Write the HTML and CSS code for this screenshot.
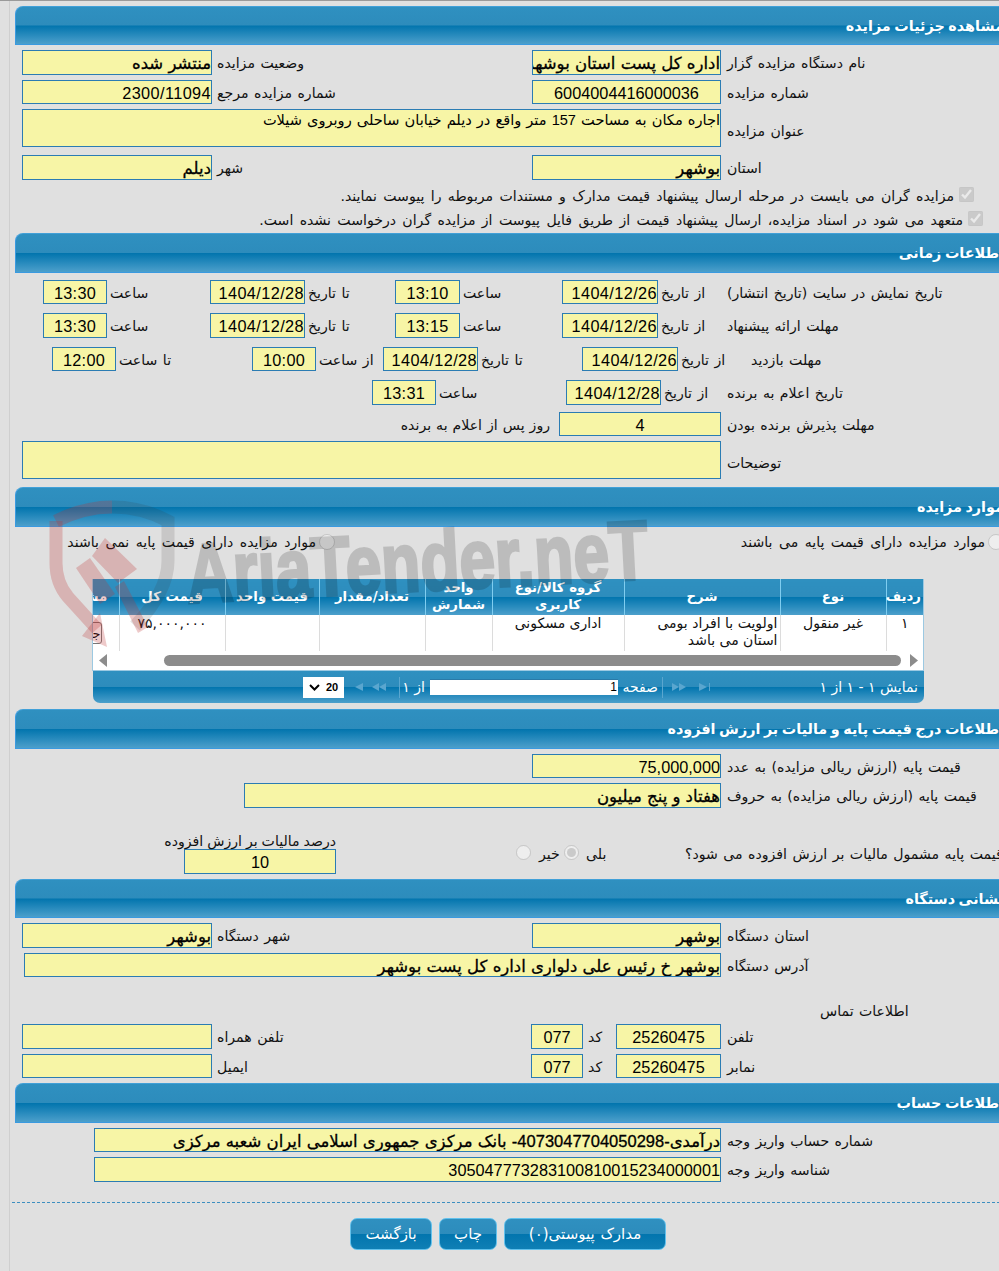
FILE: index.html
```html
<!DOCTYPE html>
<html lang="fa">
<head>
<meta charset="utf-8">
<title>مشاهده جزئیات مزایده</title>
<link rel="stylesheet" href="styles.css">
</head>
<body>
<div class="wrap">

<h2 class="sec h39">مشاهده جزئیات مزایده</h2>
<div class="row form2 h25">
  <div class="f b">منتشر شده</div><div class="l">وضعیت مزایده</div>
  <div class="f b">اداره کل پست استان بوشهر</div><div class="l">نام دستگاه مزایده گزار</div>
</div>
<div class="row form2 h24">
  <div class="f d">2300/11094</div><div class="l">شماره مزایده مرجع</div>
  <div class="f c">6004004416000036</div><div class="l">شماره مزایده</div>
</div>
<div class="row wide h38">
  <div class="f t">اجاره مکان به مساحت 157 متر واقع در دیلم خیابان ساحلی روبروی شیلات</div><div class="l">عنوان مزایده</div>
</div>
<div class="row form2 h25 mt8">
  <div class="f b">دیلم</div><div class="l">شهر</div>
  <div class="f b">بوشهر</div><div class="l">استان</div>
</div>
<div class="chk chk1"><input type="checkbox" checked disabled><span>مزایده گران می بایست در مرحله ارسال پیشنهاد قیمت مدارک و مستندات مربوطه را پیوست نمایند.</span></div>
<div class="chk chk2"><input type="checkbox" checked disabled><span>متعهد می شود در اسناد مزایده، ارسال پیشنهاد قیمت از طریق فایل پیوست از مزایده گران درخواست نشده است.</span></div>

<h2 class="sec">اطلاعات زمانی</h2>
<div class="row time h24 mt7">
  <div class="f c">13:30</div><div class="l">ساعت</div>
  <div class="f d">1404/12/28</div><div class="l">تا تاریخ</div>
  <div class="f c">13:10</div><div class="l">ساعت</div>
  <div class="f d">1404/12/26</div><div class="l">از تاریخ</div>
  <div class="l">تاریخ نمایش در سایت (تاریخ انتشار)</div>
</div>
<div class="row time h25 mt9">
  <div class="f c">13:30</div><div class="l">ساعت</div>
  <div class="f d">1404/12/28</div><div class="l">تا تاریخ</div>
  <div class="f c">13:15</div><div class="l">ساعت</div>
  <div class="f d">1404/12/26</div><div class="l">از تاریخ</div>
  <div class="l">مهلت ارائه پیشنهاد</div>
</div>
<div class="row visit h24 mt9">
  <div class="f c">12:00</div><div class="l">تا ساعت</div>
  <div class="f c">10:00</div><div class="l">از ساعت</div>
  <div class="f d">1404/12/28</div><div class="l">تا تاریخ</div>
  <div class="f d">1404/12/26</div><div class="l">از تاریخ</div>
  <div class="l">مهلت بازدید</div>
</div>
<div class="row notify h25 mt9">
  <div class="f c">13:31</div><div class="l">ساعت</div>
  <div class="f d">1404/12/28</div><div class="l">از تاریخ</div>
  <div class="l">تاریخ اعلام به برنده</div>
</div>
<div class="row accept h24 mt7">
  <div class="r">روز پس از اعلام به برنده</div>
  <div class="f c">4</div>
  <div class="l">مهلت پذیرش برنده بودن</div>
</div>
<div class="row wide h38 mb8">
  <div class="f t"></div><div class="l">توضیحات</div>
</div>

<h2 class="sec">موارد مزایده</h2>
<div class="radios">
  <label class="rad rad-no"><input type="radio" name="k" disabled><span>موارد مزایده دارای قیمت پایه نمی باشند</span></label>
  <label class="rad rad-yes"><input type="radio" name="k" disabled><span>موارد مزایده دارای قیمت پایه می باشند</span></label>
</div>
<div class="grid">
  <div class="scroll">
    <table>
      <colgroup><col class="c1"><col class="c2"><col class="c3"><col class="c4"><col class="c5"><col class="c6"><col class="c7"><col class="c8"><col class="c9"></colgroup>
      <thead>
        <tr><th>ردیف</th><th>نوع</th><th>شرح</th><th>گروه کالا/نوع کاربری</th><th>واحد شمارش</th><th>تعداد/مقدار</th><th>قیمت واحد</th><th>قیمت کل</th><th>مشاهده</th></tr>
      </thead>
      <tbody>
        <tr><td class="mid">۱</td><td class="mid">غیر منقول</td><td class="desc">اولویت با افراد بومی استان می باشد</td><td class="mid">اداری مسکونی</td><td></td><td></td><td></td><td class="mid">۷۵,۰۰۰,۰۰۰</td><td class="mid"><button class="detail" type="button">جزئیات</button></td></tr>
      </tbody>
    </table>
  </div>
  <div class="sbar">
    <svg class="arrow" width="8" height="13" viewBox="0 0 8 13"><polygon points="8,0 8,13 0,6.5"/></svg>
    <div class="thumb"></div>
    <svg class="arrow" width="8" height="13" viewBox="0 0 8 13"><polygon points="0,0 0,13 8,6.5"/></svg>
  </div>
</div>
<div class="pager">
  <div class="sel"><svg width="11" height="7" viewBox="0 0 11 7"><path d="M1 1l4.5 4.5L10 1" fill="none" stroke="#000" stroke-width="2"/></svg><span>20</span></div>
  <svg class="pi pi1" width="38" height="10" viewBox="0 0 38 10"><path d="M1 1v8M11 1v8L3 5zM34 1v8l-7-4zM27 1v8l-7-4z"/></svg>
  <span class="sep s1"></span>
  <span class="pt of">از ۱</span>
  <div class="pin">1</div>
  <span class="pt pg">صفحه</span>
  <span class="sep s2"></span>
  <svg class="pi pi2" width="40" height="10" viewBox="0 0 40 10"><path d="M0 1v8l7-4zM7 1v8l7-4zM27 1v8l8-4zM38 1v8"/><path d="M37 1h1v8h-1z"/></svg>
  <span class="pt info">نمایش ۱ - ۱ از ۱</span>
</div>

<h2 class="sec mt6">اطلاعات درج قیمت پایه و مالیات بر ارزش افزوده</h2>
<div class="row price h24">
  <div class="f">75,000,000</div><div class="l">قیمت پایه (ارزش ریالی مزایده) به عدد</div>
</div>
<div class="row letters h25">
  <div class="f b">هفتاد و پنج میلیون</div><div class="l">قیمت پایه (ارزش ریالی مزایده) به حروف</div>
</div>
<div class="vat">
  <div class="vat-box"><div class="vat-l">درصد مالیات بر ارزش افزوده</div><div class="f c">10</div></div>
  <div></div>
  <input class="vr" type="radio" name="v" disabled>
  <div class="l vt1">خیر</div>
  <input class="vr" type="radio" name="v" checked disabled>
  <div class="l vt2">بلی</div>
  <div class="l vt3">قیمت پایه مشمول مالیات بر ارزش افزوده می شود؟</div>
</div>

<h2 class="sec h39">نشانی دستگاه</h2>
<div class="row form2 h25">
  <div class="f b">بوشهر</div><div class="l">شهر دستگاه</div>
  <div class="f b">بوشهر</div><div class="l">استان دستگاه</div>
</div>
<div class="row addr h24">
  <div class="f b">بوشهر خ رئیس علی دلواری اداره کل پست بوشهر</div><div class="l">آدرس دستگاه</div>
</div>
<div class="contact">اطلاعات تماس</div>
<div class="row phone h25 mt4">
  <div class="f"></div><div class="l">تلفن همراه</div>
  <div class="f c">077</div><div class="l">کد</div>
  <div class="f c">25260475</div><div class="l">تلفن</div>
</div>
<div class="row phone h24 mb5">
  <div class="f"></div><div class="l">ایمیل</div>
  <div class="f c">077</div><div class="l">کد</div>
  <div class="f c">25260475</div><div class="l">نمابر</div>
</div>

<h2 class="sec">اطلاعات حساب</h2>
<div class="row acct h24">
  <div class="f b">درآمدی-4073047704050298- بانک مرکزی جمهوری اسلامی ایران شعبه مرکزی</div><div class="l">شماره حساب واریز وجه</div>
</div>
<div class="row acct h25">
  <div class="f">305047773283100810015234000001</div><div class="l">شناسه واریز وجه</div>
</div>
<div class="dash"></div>
<div class="btns">
  <button class="btn bk" type="button">بازگشت</button>
  <button class="btn pr" type="button">چاپ</button>
  <button class="btn dc" type="button">مدارک پیوستی(۰)</button>
</div>
</div>

<svg class="mark" width="999" height="700" viewBox="0 0 999 700">
  <path class="m-red" d="M56 520V562Q56 582 68 596L97 628" />
  <path class="m-red" d="M56 520Q84 506 112 506" />
  <path class="m-gray" d="M112 506Q142 506 168 520V560Q168 590 135 625" />
  <polygon class="m-fill" points="82,635 100,612 107,646" />
  <polygon class="m-fill" points="76,567 90,557 115,593 100,603" />
  <polygon class="m-fill" points="92,555 105,537 137,568 118,582" />
  <polygon class="m-fill" points="115,586 124,580 148,626 138,632" />
  <text class="m-text" x="188" y="602" textLength="462" lengthAdjust="spacingAndGlyphs" transform="rotate(-3 188 602)">AriaTender.neT</text>
</svg>
</body>
</html>
```
FILE: styles.css
```css
* { box-sizing: border-box; }
html, body { margin: 0; padding: 0; width: 999px; height: 1271px; overflow: hidden; }
body { position: relative; background: #e0e0e0; border-top: 1px solid #9a9a9a; font-family: "DejaVu Sans", sans-serif; font-size: 14.1px; word-spacing: 1px; color: #111; }
.wrap { width: 1006px; height: 1270px; margin-left: 9px; padding: 5px 0 0 5px; border-left: 1px solid #cfcfcf; }

.sec { margin: 0; height: 40px; padding-right: 11px; direction: rtl; font-size: 14.4px; font-weight: bold; line-height: 38px; color: #fff; white-space: nowrap; word-spacing: -1.5px; border: 1px solid #3a9ae0; border-right: 0; border-top-color: #41a0d8; border-top-left-radius: 8px; background: linear-gradient(#2f90c0 0, #2d8cbc 49%, #0275ae 51%, #4c9fcb 100%); }
.sec.h39 { height: 39px; }
.mt6 { margin-top: 6px; }

.row { display: grid; margin-top: 5px; padding-left: 7px; }
.h24 { height: 24px; }
.h25 { height: 25px; }
.h38 { height: 38px; }
.row.mt4 { margin-top: 4px; }
.row.mt7 { margin-top: 7px; }
.row.mt8 { margin-top: 8px; }
.row.mt9 { margin-top: 9px; }
.mb5 { margin-bottom: 5px; }
.mb8 { margin-bottom: 8px; }

.form2 { grid-template-columns: 190px 320px 189px 1fr; }
.wide { grid-template-columns: 699px 1fr; }
.time { padding-left: 28px; grid-template-columns: 64px 103px 95px 90px 65px 102px 96px 69px 1fr; }
.visit { padding-left: 37px; grid-template-columns: 64px 136px 64px 67px 95px 104px 96px 73px 1fr; }
.notify { padding-left: 357px; grid-template-columns: 64px 130px 95px 66px 1fr; }
.accept { grid-template-columns: 537px 162px 1fr; }
.price { padding-left: 517px; grid-template-columns: 189px 1fr; }
.letters { padding-left: 229px; grid-template-columns: 477px 1fr; }
.addr { padding-left: 9px; grid-template-columns: 697px 1fr; }
.phone { grid-template-columns: 190px 319px 52px 33px 105px 1fr; }
.acct { padding-left: 79px; grid-template-columns: 627px 1fr; }

.f { direction: rtl; text-align: right; overflow: hidden; white-space: nowrap; word-spacing: 0; border: 1px solid #2b7cb3; background: #f7f5a6; color: #000; font-family: "Liberation Sans", "DejaVu Sans", sans-serif; font-size: 16.3px; line-height: 24px; }
.f.b { font-size: 16.5px; word-spacing: .6px; -webkit-text-stroke: .3px #000; }
.f.c { text-align: center; }
.time .f.c, .visit .f.c, .notify .f.c { letter-spacing: .3px; }
.f.d { letter-spacing: .4px; }
.f.t { font-size: 14.6px; line-height: 21px; word-spacing: 1px; white-space: normal; }
.l { direction: rtl; text-align: left; padding-left: 5px; white-space: nowrap; align-self: center; }
.h24 .l, .h24 .r { padding-top: 2px; }
.h38 .l { padding-top: 6px; }
.time .l, .visit .l, .notify .l { padding-left: 3px; }
.time .l:last-child, .notify .l:last-child, .visit .l:last-child { padding-left: 0; }
.r { direction: rtl; text-align: right; padding-right: 9px; align-self: center; white-space: nowrap; word-spacing: .5px; }
.form2 .l:last-child, .wide .l, .accept .l, .price .l, .letters .l, .addr .l, .phone .l:last-child, .acct .l { padding-left: 6px; }

.chk { display: flex; align-items: center; gap: 5px; height: 24px; direction: rtl; white-space: nowrap; word-spacing: 1.9px; }
.chk span { padding-bottom: 2px; }
.chk input { width: 15px; height: 15px; margin: 0 0 6px; }
.chk1 { margin-top: 5px; padding-right: 41px; }
.chk2 { padding-right: 32px; }

.radios { display: flex; height: 20px; margin-top: 5px; word-spacing: 2px; }
.rad { display: flex; align-items: center; gap: 3px; direction: rtl; white-space: nowrap; }
.rad input { width: 16px; height: 16px; margin: 0; }
.rad-no { width: 320px; }
.rad-yes { flex: 1; padding-right: 11px; }

.grid { width: 832px; height: 92px; margin: 27px 0 0 77px; border: 1px solid #9cc9e2; border-top: 0; background: #fff; }
.scroll { overflow: hidden; height: 72px; direction: rtl; }
table { width: 879px; table-layout: fixed; border-collapse: collapse; font-size: 14px; word-spacing: 0; }
.c1 { width: 37px; } .c2 { width: 106px; } .c3 { width: 156px; } .c4 { width: 132px; } .c5 { width: 67px; }
.c6 { width: 106px; } .c7 { width: 94px; } .c8 { width: 106px; } .c9 { width: 75px; }
th { height: 36px; padding: 0 2px 2px; color: #fff; font-size: 13.3px; font-weight: bold; line-height: 17px; border-left: 1px solid #7fcdf0; background: linear-gradient(#2f90c0 0, #2d8cbc 49%, #0275ae 51%, #4c9fcb 100%); }
td { height: 36px; padding: 0 3px; vertical-align: top; line-height: 17px; text-align: right; border-left: 1px solid #dcdcdc; border-bottom: 1px solid #dcdcdc; }
td.mid { text-align: center; }
td.desc { padding: 0 2px 0 30px; }
.detail { width: 40px; height: 22px; margin-top: 7px; padding: 0; overflow: hidden; font: 13px "DejaVu Sans", sans-serif; background: #fff; border: 1px solid #777; border-radius: 3px; white-space: nowrap; }

.sbar { display: flex; align-items: center; height: 19px; padding-left: 6px; }
.arrow { fill: #8c8c8c; }
.thumb { width: 737px; height: 11px; margin: 0 9px 0 57px; border-radius: 6px; background: #8c8c8c; }

.pager { position: relative; display: flex; align-items: center; width: 831px; height: 32px; margin-left: 78px; border-radius: 0 0 7px 7px; color: #fff; font-size: 14px; word-spacing: 0; white-space: nowrap; background: linear-gradient(#2f90c0 0, #2d8cbc 49%, #0275ae 51%, #4c9fcb 100%); }
.sel { display: flex; align-items: center; gap: 6px; width: 41px; height: 21px; margin-left: 210px; padding-left: 6px; color: #000; font: bold 11px "Liberation Sans", sans-serif; background: #fff; }
.pi { fill: #5aa6cf; }
.pi1 { margin-left: 8px; }
.sep { width: 1px; height: 21px; background: #5aa6cf; }
.s1 { margin-left: 9px; }
.pt { direction: rtl; }
.of { width: 20px; margin-left: 5px; }
.pin { width: 188px; height: 16px; margin-left: 5px; padding-right: 1px; color: #000; text-align: right; font: 12px/15px "Liberation Sans", sans-serif; background: #fff; border-top: 1px solid #2a7aa8; }
.pg { width: 35px; margin-left: 5px; }
.s2 { margin-left: 4px; }
.pi2 { margin-left: 9px; }
.info { margin-left: auto; margin-right: 6px; }

.vat { display: grid; height: 71px; padding-left: 169px; grid-template-columns: 152px 180px 15px 33px 15px 106px 1fr; align-items: start; }
.vat-box { padding-top: 25px; }
.vat-box .f { height: 25px; }
.vat-l { height: 16px; line-height: 16px; direction: rtl; text-align: right; white-space: nowrap; word-spacing: -.5px; }
.vr { width: 15px; height: 15px; margin: 37px 0 0; }
.vat .l { align-self: start; padding-top: 38px; }
.vt1 { padding-left: 8px; }
.vt2 { padding-left: 7px; }
.vat .vt3 { padding-left: 0; }

.contact { height: 18px; margin-top: 25px; padding-left: 805px; direction: ltr; line-height: 18px; }

.dash { margin: 20px 0 0 -3px; border-top: 1px dashed #3d8fc0; }
.btns { display: flex; gap: 7px; margin: 15px 0 0 335px; }
.btn { height: 32px; padding: 0; color: #fff; font: 15px "DejaVu Sans", sans-serif; word-spacing: 1px; direction: rtl; border: 1px solid #62c1ec; border-radius: 7px; background: linear-gradient(#2f90c0 0, #2d8cbc 49%, #0275ae 51%, #0f7fb5 100%); }
.bk { width: 82px; }
.pr { width: 58px; }
.dc { width: 162px; }

.mark { position: absolute; top: 0; left: 0; pointer-events: none; }
.m-red { fill: none; stroke: rgba(190, 50, 50, .26); stroke-width: 13; }
.m-gray { fill: none; stroke: rgba(60, 50, 50, .14); stroke-width: 13; }
.m-fill { fill: rgba(190, 50, 50, .26); }
.m-text { fill: #000; stroke: #000; stroke-width: 3; opacity: .155; font: bold 84px "Liberation Sans", sans-serif; }
```
